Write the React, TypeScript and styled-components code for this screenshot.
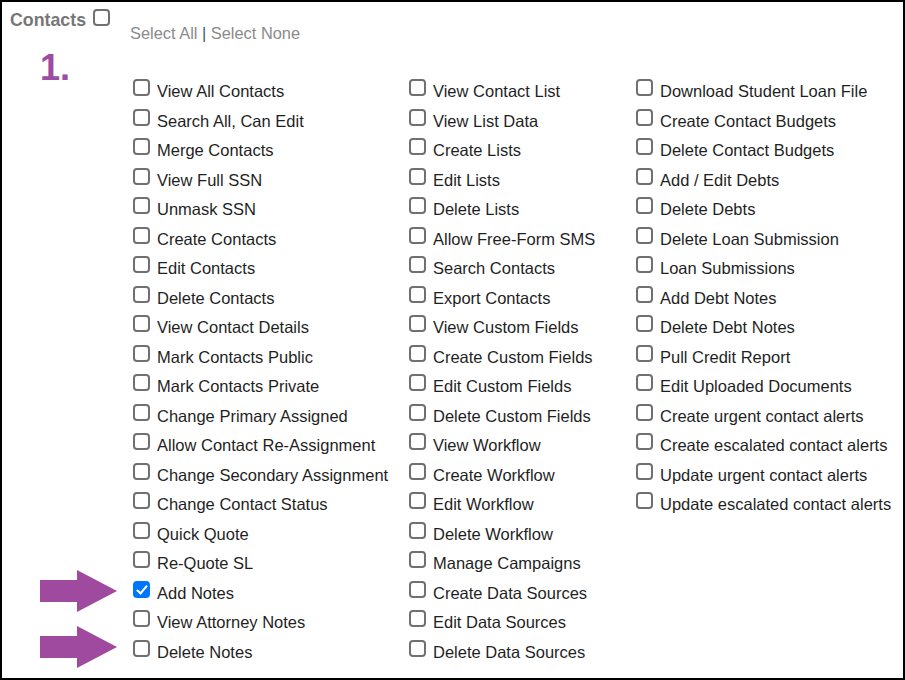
import React from "react";
import styled, { createGlobalStyle } from "styled-components";

const GlobalStyle = createGlobalStyle`
  html, body { margin: 0; padding: 0; background: #fff; }
  body { font-family: "Liberation Sans", Arial, sans-serif; }
  * { box-sizing: border-box; }
`;

const Panel = styled.div`
  width: 905px;
  height: 680px;
  border: 2px solid #000;
  padding: 8px 8px 0 8px;
  position: relative;
  overflow: hidden;
`;

const Header = styled.div`
  display: flex;
  align-items: flex-start;
`;

const TitleBlock = styled.div`
  width: 120px;
  display: flex;
  align-items: flex-start;
  gap: 7px;
`;

const Title = styled.span`
  font-size: 17.8px;
  line-height: 20px;
  font-weight: bold;
  color: #777;
`;

const SelectLinks = styled.div`
  margin-top: 14px;
  font-size: 16.4px;
  line-height: 18px;
  color: #8a8a8a;
`;

const Sep = styled.span`
  color: #555;
`;

const Body = styled.div`
  display: flex;
  align-items: flex-start;
`;

const Gutter = styled.div`
  width: 123px;
  padding-left: 30px;
  padding-top: 8px;
  font-size: 36px;
  line-height: 36px;
  font-weight: bold;
  color: #9c4ca3;
`;

const Columns = styled.div`
  display: flex;
  margin-top: 35px;
`;

const Column = styled.div<{ $width?: number }>`
  display: flex;
  flex-direction: column;
  width: ${(p) => (p.$width ? `${p.$width}px` : "auto")};
`;

const Item = styled.label`
  position: relative;
  height: 29.5px;
  display: flex;
  align-items: flex-start;
  gap: 7px;
  white-space: nowrap;
`;

const Box = styled.input.attrs({ type: "checkbox" })<{ $top?: number }>`
  appearance: none;
  -webkit-appearance: none;
  margin: ${(p) => (p.$top ?? 2)}px 0 0 0;
  width: 17px;
  height: 17px;
  flex: none;
  border: 2px solid #707070;
  border-radius: 4px;
  background: #fff;
  position: relative;
  &:checked {
    background: #0075ff;
    border-color: #0075ff;
  }
  &:checked::after {
    content: "";
    position: absolute;
    left: 4px;
    top: 0px;
    width: 4px;
    height: 9px;
    border-right: 2.5px solid #fff;
    border-bottom: 2.5px solid #fff;
    transform: rotate(40deg);
  }
`;

const Text = styled.span`
  padding-top: 5px;
  font-size: 16.5px;
  line-height: 18px;
  color: #1f1f1f;
`;

const Arrow = styled.svg<{ $top: number }>`
  position: absolute;
  left: -93px;
  top: ${(p) => p.$top}px;
  width: 77px;
  height: 42px;
`;

type Perm = { label: string; checked?: boolean; arrow?: number };

const col1: Perm[] = [
  { label: "View All Contacts" },
  { label: "Search All, Can Edit" },
  { label: "Merge Contacts" },
  { label: "View Full SSN" },
  { label: "Unmask SSN" },
  { label: "Create Contacts" },
  { label: "Edit Contacts" },
  { label: "Delete Contacts" },
  { label: "View Contact Details" },
  { label: "Mark Contacts Public" },
  { label: "Mark Contacts Private" },
  { label: "Change Primary Assigned" },
  { label: "Allow Contact Re-Assignment" },
  { label: "Change Secondary Assignment" },
  { label: "Change Contact Status" },
  { label: "Quick Quote" },
  { label: "Re-Quote SL" },
  { label: "Add Notes", checked: true, arrow: -9 },
  { label: "View Attorney Notes" },
  { label: "Delete Notes", arrow: -12 },
];

const col2: Perm[] = [
  "View Contact List",
  "View List Data",
  "Create Lists",
  "Edit Lists",
  "Delete Lists",
  "Allow Free-Form SMS",
  "Search Contacts",
  "Export Contacts",
  "View Custom Fields",
  "Create Custom Fields",
  "Edit Custom Fields",
  "Delete Custom Fields",
  "View Workflow",
  "Create Workflow",
  "Edit Workflow",
  "Delete Workflow",
  "Manage Campaigns",
  "Create Data Sources",
  "Edit Data Sources",
  "Delete Data Sources",
].map((label) => ({ label }));

const col3: Perm[] = [
  "Download Student Loan File",
  "Create Contact Budgets",
  "Delete Contact Budgets",
  "Add / Edit Debts",
  "Delete Debts",
  "Delete Loan Submission",
  "Loan Submissions",
  "Add Debt Notes",
  "Delete Debt Notes",
  "Pull Credit Report",
  "Edit Uploaded Documents",
  "Create urgent contact alerts",
  "Create escalated contact alerts",
  "Update urgent contact alerts",
  "Update escalated contact alerts",
].map((label) => ({ label }));

const PermItem = ({ p }: { p: Perm }) => (
  <Item>
    {p.arrow !== undefined && (
      <Arrow $top={p.arrow} viewBox="0 0 77 42">
        <polygon
          points="0,10 37,10 37,0 77,21 37,42 37,32 0,32"
          fill="#a04a9f"
        />
      </Arrow>
    )}
    <Box defaultChecked={!!p.checked} />
    <Text>{p.label}</Text>
  </Item>
);

export default function App() {
  return (
    <>
      <GlobalStyle />
      <Panel>
        <Header>
          <TitleBlock>
            <Title>Contacts</Title>
            <Box $top={-1} />
          </TitleBlock>
          <SelectLinks>
            Select All <Sep>|</Sep> Select None
          </SelectLinks>
        </Header>
        <Body>
          <Gutter>1.</Gutter>
          <Columns>
            <Column $width={276}>
              {col1.map((p) => (
                <PermItem key={p.label} p={p} />
              ))}
            </Column>
            <Column $width={227}>
              {col2.map((p) => (
                <PermItem key={p.label} p={p} />
              ))}
            </Column>
            <Column>
              {col3.map((p) => (
                <PermItem key={p.label} p={p} />
              ))}
            </Column>
          </Columns>
        </Body>
      </Panel>
    </>
  );
}
